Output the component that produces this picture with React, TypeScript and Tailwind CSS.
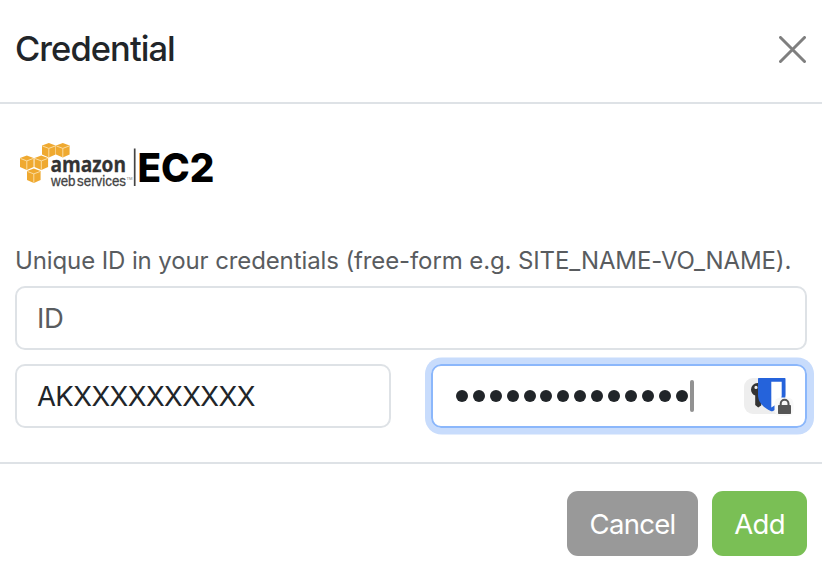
function Cube({ x, y }: { x: number; y: number }) {
  return (
    <g transform={`translate(${x} ${y})`}>
      <path d="M0 2.500 6.800 0 13.600 2.500v9L6.800 14.500 0 11.500Z" fill="#efa930" />
      <path d="M0.500 3 6.800 5.400l6.300-2.400M6.800 5.400v8.800" fill="none" stroke="#fbdca0" strokeWidth="1" />
    </g>
  );
}

function Logo() {
  return (
    <svg width="200" height="50" viewBox="0 0 200 50" className="block">
      <Cube x={27} y={2} />
      <Cube x={41} y={2} />
      <Cube x={5} y={14.5} />
      <Cube x={19.500} y={14.5} />
      <Cube x={12} y={27.500} />
      <text x="35.500" y="31" fontSize="22" fontWeight="700" fill="#333" stroke="#333" strokeWidth="0.3" fontFamily="'Open Sans', sans-serif" textLength="75.500" lengthAdjust="spacingAndGlyphs">amazon</text>
      <text x="36" y="44.700" fontSize="15.500" fill="#444" stroke="#444" strokeWidth="0.3" wordSpacing="-2.500" fontFamily="'Liberation Sans', Arial, sans-serif" textLength="75" lengthAdjust="spacingAndGlyphs">web services</text>
      <text x="111.500" y="39" fontSize="4" fill="#777" fontFamily="'Liberation Sans', Arial, sans-serif" textLength="6" lengthAdjust="spacingAndGlyphs">TM</text>
      <path d="M119.700 7.500v37.500" stroke="#444" strokeWidth="1.700" />
      <text x="122.500" y="40.500" fontSize="40" fontWeight="800" fill="#000" fontFamily="'Inter', sans-serif" textLength="77" lengthAdjust="spacingAndGlyphs">EC2</text>
    </svg>
  );
}

function VaultIcon() {
  return (
    <svg width="50" height="38" viewBox="0 0 50 38" className="block">
      <rect x="0" y="0" width="42" height="36" rx="9" fill="#eee" />
      <path fillRule="evenodd" d="M13.500 5a6.500 6.500 0 0 0-6.500 6.500c0 3 1.700 5.200 4.200 6V27l3 2.500 3-2V5Zm-1.500 2.800a1.600 1.600 0 1 1 0 3.200 1.600 1.600 0 0 1 0-3.200Z" fill="#333" />
      <path d="M15 0h25.500c.6 0 1 .4 1 1v16c0 8-7 13-12.500 16q-1.200.6-2.400 0C20 29.500 14 25 14 17V1c0-.6.4-1 1-1Z" fill="#2563db" />
      <path d="M27.300 3.700h10.400V17.500c0 5-5 9-10.400 12Z" fill="#fff" />
      <rect x="30.500" y="19.500" width="19" height="18.500" rx="6" fill="#f8f8f8" />
      <path d="M36.700 28v-2.300a3.900 3.900 0 0 1 7.800 0v2.300" fill="none" stroke="#555" strokeWidth="2" />
      <rect x="34" y="27" width="13" height="9" rx="0.800" fill="#555" />
    </svg>
  );
}

export default function App() {
  return (
    <div className="flex h-[576px] w-[822px] flex-col bg-white font-['Inter','Liberation_Sans',sans-serif] text-[#212529]">
      <header className="flex h-[104px] shrink-0 items-center justify-between border-b-2 border-[#dee2e6] pr-4 pl-[15px] pb-1">
        <h1 className="text-[34.500px] leading-none font-medium tracking-[-0.950px]">Credential</h1>
        <button aria-label="Close" className="block">
          <svg width="27" height="27" viewBox="0 0 27 27">
            <path d="M1.500 1.500l24 24M25.500 1.500l-24 24" stroke="#7f7f7f" strokeWidth="3" strokeLinecap="round" />
          </svg>
        </button>
      </header>
      <main className="flex h-[358px] shrink-0 flex-col px-[15px] pt-[37px]">
        <Logo />
        <p className="mt-[52px] h-[43px] text-[24px] leading-[36px] tracking-[-0.110px] whitespace-nowrap text-[#595c5f]">
          Unique ID in your credentials (free-form e.g. SITE_NAME-VO_NAME).
        </p>
        <div className="flex h-16 items-center rounded-[10px] border-2 border-[#dee2e6] px-[20px] pt-0.5 text-[27.500px] tracking-[-0.500px] text-[#595c5f]">ID</div>
        <div className="mt-3.5 flex gap-10">
          <div className="flex h-16 w-[376px] items-center rounded-[10px] border-2 border-[#dee2e6] px-[20px] pt-0.5 text-[27.500px] tracking-[-0.600px]">
            AKXXXXXXXXXX
          </div>
          <div className="flex h-16 w-[376px] items-center rounded-[10px] border-2 border-[#8bb7fb] pl-[23px] pr-[11px] shadow-[0.5px_0_0_6.5px_#c8dcfc]">
            <div className="flex gap-[4.900px]">
              {Array.from({ length: 14 }, (_, i) => (
                <span key={i} className="size-3 rounded-full bg-[#212529]" />
              ))}
            </div>
            <span className="ml-[2px] h-8 w-1 rounded-full bg-[#929292]" />
            <span className="ml-auto pt-0.5"><VaultIcon /></span>
          </div>
        </div>
      </main>
      <footer className="flex h-[114px] justify-end gap-3.5 border-t-2 border-[#dee2e6] px-[15px] pt-[27px] text-[27.500px] tracking-[-0.700px] text-white">
        <button className="h-[65px] w-[131px] rounded-[11px] bg-[#999] pt-0.5">Cancel</button>
        <button className="h-[65px] w-[95px] rounded-[11px] bg-[#7abf55] pt-0.5">Add</button>
      </footer>
    </div>
  );
}
